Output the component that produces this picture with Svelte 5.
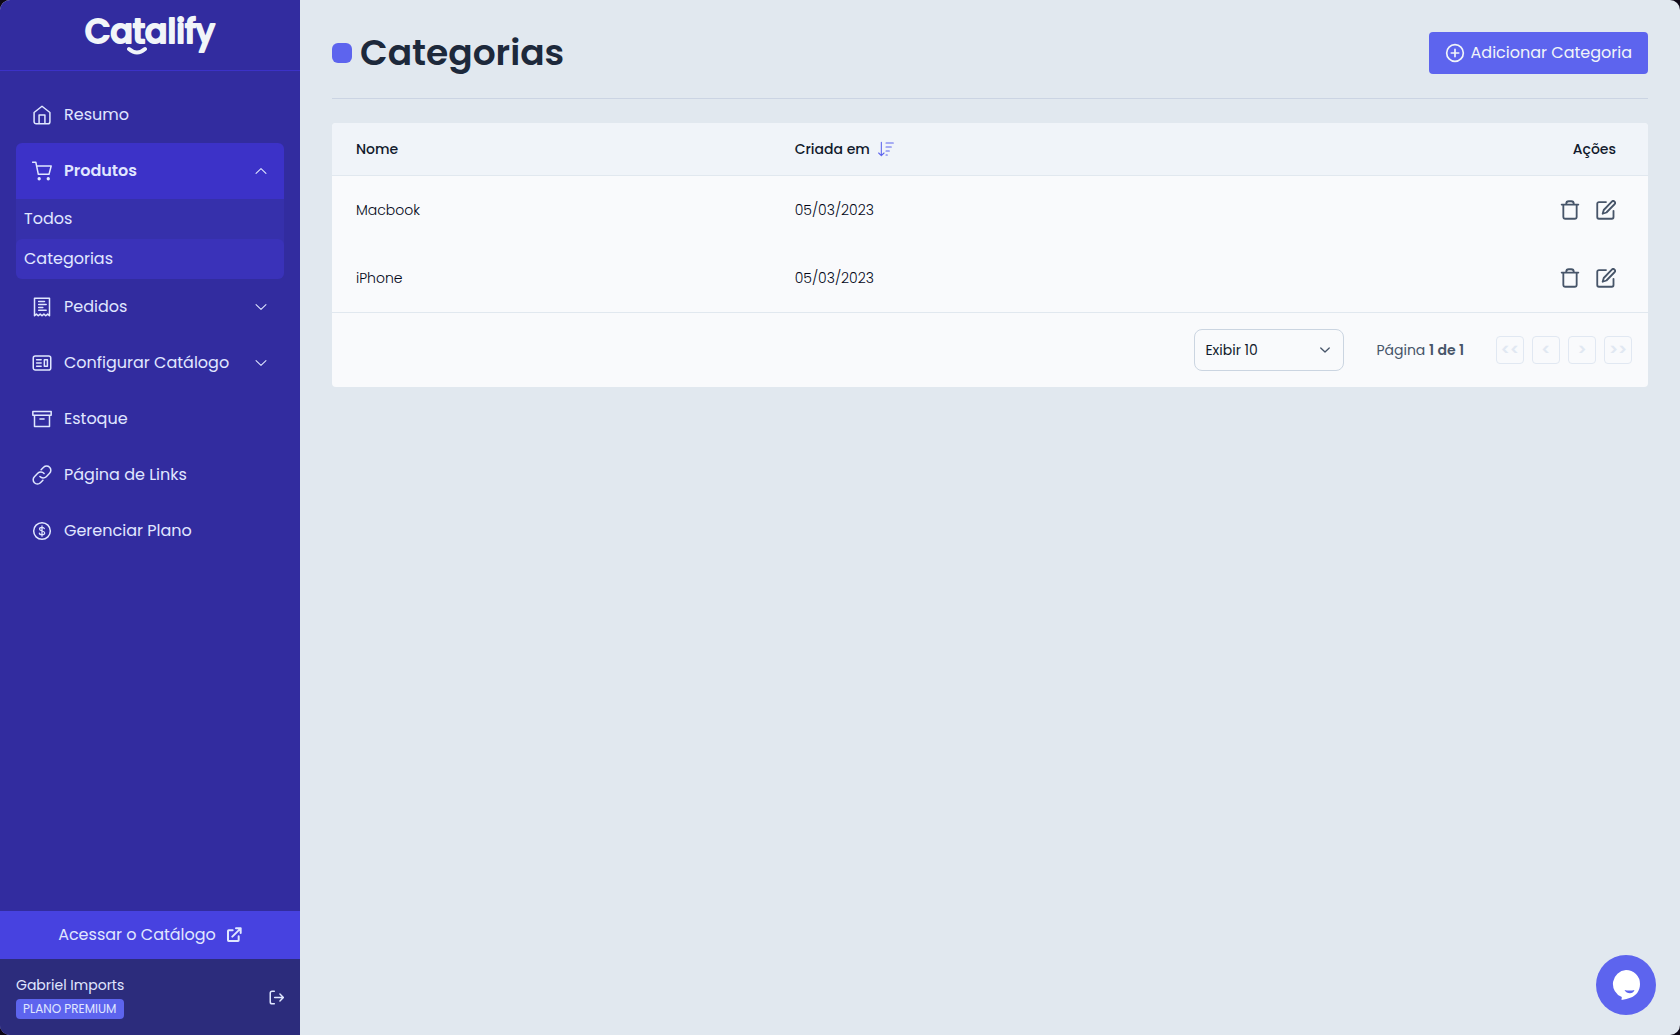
<script lang="ts">
	type Item = {
		id: string;
		label: string;
		icon: string;
		children?: string[];
	};

	// 24x24 stroke icons
	const icons: Record<string, string> = {
		home: '<path d="M2.5 9 12 1.500l9.500 7.500V20a2.500 2.500 0 0 1-2.500 2.500H5A2.500 2.500 0 0 1 2.500 20z"/><path d="M8.500 22V12h7v10"/>',
		cart: '<path d="M.6 1.500h4L7.600 16h12.800L23 6H5.600"/><circle cx="8.600" cy="21.300" r="1.100" fill="currentColor"/><circle cx="19.500" cy="21.300" r="1.100" fill="currentColor"/>',
		receipt:
			'<path d="M3 22.500V1.500h18v21l-2.200-2-2.300 2-2.200-2-2.300 2-2.200-2-2.300 2-2.200-2z"/><path d="M8 5.500h7M8 9h9M8 12.500h5M8 16h9"/>',
		news: '<rect x="1.500" y="3.500" width="21" height="17" rx="2.500"/><path d="M5.500 8h5.500M5.500 12h5.500M5.500 16h5.500"/><path d="M14.800 8h3.700v8h-3.700z"/>',
		archive: '<path d="M1 3h22v4.500H1zM3 7.500V21h18V7.500M9.500 12h5"/>',
		link: '<path d="M9.500 13.800a5.300 5.300 0 0 0 7.600.2l4-4a5 5 0 0 0-7.200-7.200l-3 3"/><path d="M14.500 10.200a5.300 5.300 0 0 0-7.600-.2l-4 4a5 5 0 0 0 7.200 7.200l3-3"/>',
		dollar:
			'<circle cx="12" cy="12" r="10"/><path stroke-width="1.500" d="M14.800 9.200C14.500 8 13.500 7.500 12 7.500c-1.800 0-3 .8-3 2.200 0 3.300 6.200 1.300 6.200 4.600 0 1.400-1.300 2.200-3.200 2.200-1.700 0-3-.6-3.200-2M12 5.800v12.400"/>',
		up: '<path d="m3.500 16 8.500-8 8.500 8"/>',
		down: '<path d="m3.500 8 8.500 8 8.500-8"/>',
		external: '<path d="M10 5H4a1 1 0 0 0-1 1v14a1 1 0 0 0 1 1h14a1 1 0 0 0 1-1v-6M15 2h7v7M22 2 9.500 14.500"/>',
		logout: '<path d="M8.500 2H5a3 3 0 0 0-3 3v14a3 3 0 0 0 3 3h3.500M9 12h13.500M17.500 6.500 23 12l-5.500 5.500"/>',
		plus: '<circle cx="12" cy="12" r="10"/><path d="M12 7.500v9M7.500 12h9"/>',
		sort: '<path d="M5 2v20M1 18l4 4 4-4M12 3h11M12 9h8M12 15h5M12 21h2"/>',
		trash: '<path d="M2 5.500h20M4 5.500v14.500A2.500 2.500 0 0 0 6.500 22.500h11A2.500 2.500 0 0 0 20 20V5.500M7.500 5.500V4.500a3 3 0 0 1 3-3h3a3 3 0 0 1 3 3v1"/>',
		edit: '<path d="M12 2.500H3.500A2 2 0 0 0 1.500 4.500v16a2 2 0 0 0 2 2H19a2 2 0 0 0 2-2V13"/><path d="M19 1.900a2.200 2.200 0 0 1 3.200 3.200L12.500 15 8 16.500 9.300 12z"/>'
	};

	const menu: Item[] = [
		{ id: 'resumo', label: 'Resumo', icon: 'home' },
		{ id: 'produtos', label: 'Produtos', icon: 'cart', children: ['Todos', 'Categorias'] },
		{ id: 'pedidos', label: 'Pedidos', icon: 'receipt', children: [] },
		{ id: 'configurar', label: 'Configurar Catálogo', icon: 'news', children: [] },
		{ id: 'estoque', label: 'Estoque', icon: 'archive' },
		{ id: 'links', label: 'Página de Links', icon: 'link' },
		{ id: 'plano', label: 'Gerenciar Plano', icon: 'dollar' }
	];

	let categories = [
		{ name: 'Macbook', createdAt: '05/03/2023' },
		{ name: 'iPhone', createdAt: '05/03/2023' }
	];

	let opened = 'produtos';
	let current = 'Categorias';
	let pageSize = 10;

	function toggle(id: string) {
		opened = opened === id ? '' : id;
	}

	function removeCategory(name: string) {
		categories = categories.filter((category) => category.name !== name);
	}
</script>

{#snippet icon(name: string, size: number, stroke = 2)}
	<svg
		width={size}
		height={size}
		viewBox="0 0 24 24"
		fill="none"
		stroke="currentColor"
		stroke-width={stroke}
		stroke-linecap="round"
		stroke-linejoin="round"
		aria-hidden="true">{@html icons[name]}</svg
	>
{/snippet}

<div class="layout">
	<aside class="sidebar">
		<a class="logo" href="/" aria-label="Catalify">
			<svg width="140" height="48" viewBox="0 0 140 48">
				<text x="70" y="35" text-anchor="middle">Catalify</text>
				<path d="M49 41q8 7 16 0" />
			</svg>
		</a>

		<nav class="menu">
			{#each menu as item}
				{#if item.children}
					<button
						class="item"
						class:active={opened === item.id}
						aria-expanded={opened === item.id}
						on:click={() => toggle(item.id)}
					>
						{@render icon(item.icon, 20, 1.8)}
						<span>{item.label}</span>
						{@render icon(opened === item.id ? 'up' : 'down', 14, 1.8)}
					</button>
					{#if opened === item.id && item.children.length}
						<div class="submenu">
							{#each item.children as child}
								<a href="/{child.toLowerCase()}" class:current={child === current}>{child}</a>
							{/each}
						</div>
					{/if}
				{:else}
					<a class="item" href="/{item.id}">
						{@render icon(item.icon, 20, 1.8)}
						<span>{item.label}</span>
					</a>
				{/if}
			{/each}
		</nav>

		<a class="catalog" href="/catalogo">
			Acessar o Catálogo
			{@render icon('external', 16, 3)}
		</a>

		<div class="account">
			<div>
				<p>Gabriel Imports</p>
				<span class="plan">PLANO PREMIUM</span>
			</div>
			<button aria-label="Sair">{@render icon('logout', 15, 2.4)}</button>
		</div>
	</aside>

	<main>
		<header>
			<h1>Categorias</h1>
			<button class="add">
				{@render icon('plus', 20, 2)}
				Adicionar Categoria
			</button>
		</header>

		<section class="card">
			<table>
				<thead>
					<tr>
						<th>Nome</th>
						<th><span class="sorted">Criada em {@render icon('sort', 16, 1.6)}</span></th>
						<th class="actions">Ações</th>
					</tr>
				</thead>
				<tbody>
					{#each categories as category}
						<tr>
							<td>{category.name}</td>
							<td>{category.createdAt}</td>
							<td class="actions">
								<div>
									<button
										aria-label="Excluir {category.name}"
										on:click={() => removeCategory(category.name)}
									>
										{@render icon('trash', 20, 2.2)}
									</button>
									<button aria-label="Editar {category.name}">
										{@render icon('edit', 20, 2.2)}
									</button>
								</div>
							</td>
						</tr>
					{/each}
				</tbody>
			</table>

			<footer>
				<div class="select">
					<select aria-label="Itens por página" bind:value={pageSize}>
						<option value={10}>Exibir 10</option>
						<option value={20}>Exibir 20</option>
						<option value={50}>Exibir 50</option>
					</select>
					{@render icon('down', 12, 2.6)}
				</div>
				<p>Página <strong>1 de 1</strong></p>
				<div class="pages">
					<button disabled aria-label="Primeira página">&lt;&lt;</button>
					<button disabled aria-label="Página anterior">&lt;</button>
					<button disabled aria-label="Próxima página">&gt;</button>
					<button disabled aria-label="Última página">&gt;&gt;</button>
				</div>
			</footer>
		</section>
	</main>

	<button class="chat" aria-label="Abrir chat">
		<svg width="28" height="30" viewBox="0 0 28 30" aria-hidden="true">
			<path fill="#fff" d="M14 0a14 14 0 0 1 14 14c0 7-4 11.500-9 13.500-3 1.200-6 1.800-9.500 2.500l.3-3A14 14 0 0 1 14 0z" />
			<path fill="#5d64ee" d="M12.500 20q5 1.200 10 0-1.300 3.200-4.500 3.200-3.600 0-5.500-3.200z" />
		</svg>
	</button>
</div>

<style>
	:global(body) {
		background: #0d0715;
	}
	.layout {
		display: flex;
		min-height: 100vh;
		border-radius: 10px;
		overflow: hidden;
		background: #e1e8ef;
		color: #111a2c;
		font-family: Poppins, Inter, sans-serif;
		font-size: 14px;
		line-height: 20px;
	}
	.layout * {
		box-sizing: border-box;
	}
	svg {
		display: block;
		flex: none;
	}
	a {
		color: inherit;
		text-decoration: none;
	}
	button {
		padding: 0;
		border: 0;
		background: none;
		color: inherit;
		font: inherit;
		cursor: pointer;
	}
	p {
		margin: 0;
	}

	.sidebar {
		display: flex;
		flex-direction: column;
		flex: none;
		width: 300px;
		background: #322c9f;
		color: #e0e7ff;
		font-size: 16px;
		line-height: 24px;
	}
	.logo {
		display: flex;
		justify-content: center;
		padding: 8px 0 14px;
		border-bottom: 1px solid #3c32c8;
	}
	.logo text {
		fill: #f1f5f9;
		stroke: #f1f5f9;
		stroke-width: 2;
		stroke-linejoin: round;
		font-size: 33px;
		font-weight: 500;
	}
	.logo path {
		fill: none;
		stroke: #f1f5f9;
		stroke-width: 4;
		stroke-linecap: round;
	}
	.menu {
		flex: 1;
		padding: 16px;
	}
	.item {
		display: flex;
		align-items: center;
		gap: 12px;
		width: 100%;
		height: 56px;
		padding: 0 16px;
		border-radius: 6px;
		text-align: left;
	}
	.item span {
		flex: 1;
	}
	.item.active {
		border-radius: 6px 6px 0 0;
		background: #3c32c8;
		font-weight: 600;
	}
	.submenu {
		border-radius: 0 0 6px 6px;
		background: #3630ab;
	}
	.submenu a {
		display: block;
		padding: 8px;
		border-radius: 6px;
	}
	.submenu a.current {
		background: #3a32b9;
	}
	.catalog {
		display: flex;
		align-items: center;
		justify-content: center;
		gap: 10px;
		height: 48px;
		background: #4742e0;
	}
	.account {
		display: flex;
		align-items: center;
		justify-content: space-between;
		padding: 16px;
		background: #2c2c7c;
		font-size: 14px;
		line-height: 20px;
	}
	.account p {
		margin-bottom: 4px;
	}
	.plan {
		display: block;
		padding: 0 7px;
		border-radius: 4px;
		background: #5d64ee;
		font-size: 12px;
	}

	main {
		flex: 1;
		min-width: 0;
		padding: 32px;
	}
	header {
		display: flex;
		align-items: center;
		justify-content: space-between;
		margin-bottom: 24px;
		padding-bottom: 24px;
		border-bottom: 1px solid #cbd4e3;
	}
	h1 {
		display: flex;
		align-items: center;
		gap: 8px;
		margin: 0;
		color: #1d293b;
		font-size: 36px;
		font-weight: 600;
		line-height: 40px;
	}
	h1::before {
		content: '';
		width: 20px;
		height: 20px;
		border-radius: 6px;
		background: #5d64ee;
	}
	.add {
		display: flex;
		align-items: center;
		gap: 6px;
		height: 42px;
		padding: 0 16px;
		border-radius: 4px;
		background: #5d64ee;
		color: #f1f5f9;
		font-size: 16px;
	}

	.card {
		overflow: hidden;
		border-radius: 4px;
		background: #f9fafc;
	}
	table {
		width: 100%;
		border-spacing: 0;
		table-layout: fixed;
	}
	th,
	td {
		padding: 0 24px;
		text-align: left;
	}
	th {
		height: 53px;
		border-bottom: 1px solid #e1e8ef;
		background: #f0f4f9;
		font-weight: 500;
	}
	td {
		height: 68px;
		color: #020617;
		font-weight: 300;
	}
	.sorted {
		display: flex;
		align-items: center;
		gap: 8px;
	}
	.sorted :global(svg) {
		color: #5d64ee;
	}
	.actions {
		padding-right: 32px;
		text-align: right;
	}
	.actions div {
		display: flex;
		justify-content: flex-end;
		gap: 16px;
		color: #475569;
	}

	footer {
		display: flex;
		align-items: center;
		justify-content: flex-end;
		gap: 32px;
		padding: 16px;
		border-top: 1px solid #e1e8ef;
		color: #475569;
	}
	.select {
		position: relative;
		width: 150px;
	}
	select {
		appearance: none;
		width: 100%;
		height: 42px;
		padding: 0 10px;
		border: 1px solid #cbd5e1;
		border-radius: 8px;
		background: #f9fafc;
		color: #111a2c;
		font: inherit;
	}
	.select svg {
		position: absolute;
		top: 15px;
		right: 13px;
		pointer-events: none;
	}
	strong {
		font-weight: 600;
	}
	.pages {
		display: flex;
		gap: 8px;
	}
	.pages button {
		width: 28px;
		height: 28px;
		border: 1px solid #e1e8f2;
		border-radius: 4px;
		color: #e1e8f2;
		font-size: 16px;
		font-weight: 600;
		line-height: 24px;
	}

	.chat {
		position: fixed;
		right: 24px;
		bottom: 20px;
		display: grid;
		place-items: center;
		width: 60px;
		height: 60px;
		border-radius: 50%;
		background: #5d64ee;
	}
</style>
